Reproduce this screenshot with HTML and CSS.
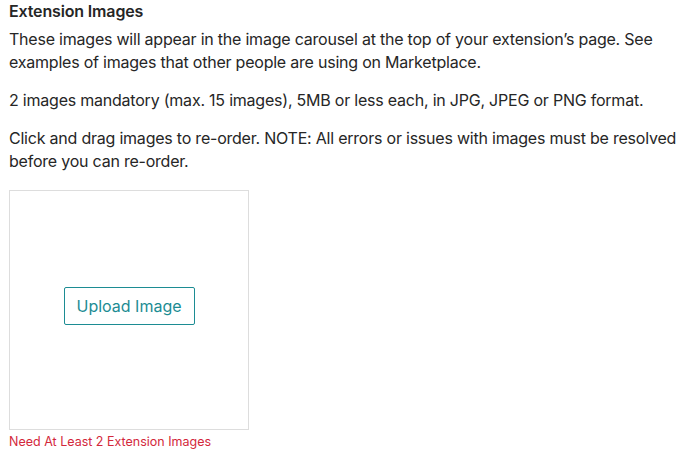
FILE: index.html
```html
<!DOCTYPE html>
<html>
<head>
<meta charset="utf-8">
<link rel="stylesheet" href="styles.css">
</head>
<body>
<section class="field">
  <h2 class="title">Extension Images</h2>
  <p class="desc">These images will appear in the image carousel at the top of your extension’s page. See examples of images that other people are using on Marketplace.</p>
  <p class="desc">2 images mandatory (max. 15 images), 5MB or less each, in JPG, JPEG or PNG format.</p>
  <p class="desc">Click and drag images to re-order. NOTE: All errors or issues with images must be resolved before you can re-order.</p>
  <div class="dropbox">
    <button class="upload">Upload Image</button>
  </div>
  <div class="error">Need At Least 2 Extension Images</div>
</section>
</body>
</html>
```
FILE: styles.css
```css
html, body {
  margin: 0;
  background: #fff;
}
body {
  font-family: Inter, "Noto Sans", sans-serif;
  color: #262626;
}
.field {
  padding: 0 9px;
  width: 680px;
}
.title {
  margin: 0 0 5px;
  font-size: 16px;
  font-weight: 600;
  line-height: 23px;
  letter-spacing: -0.15px;
}
.desc {
  margin: 0 0 15px;
  font-size: 16px;
  line-height: 23px;
  letter-spacing: -0.22px;
}
.dropbox {
  box-sizing: border-box;
  width: 240px;
  height: 240px;
  border: 1px solid #ddd;
  display: flex;
  align-items: center;
  justify-content: center;
  margin-top: 17px;
}
.upload {
  box-sizing: border-box;
  width: 131px;
  height: 38px;
  border: 1px solid #1c8c93;
  border-radius: 2px;
  background: #fff;
  color: #1c8c93;
  font-family: inherit;
  font-size: 16px;
  padding: 0;
  margin-bottom: 8px;
}
.error {
  margin-top: 4px;
  color: #d3283b;
  font-size: 12.5px;
  line-height: 16px;
}
```
